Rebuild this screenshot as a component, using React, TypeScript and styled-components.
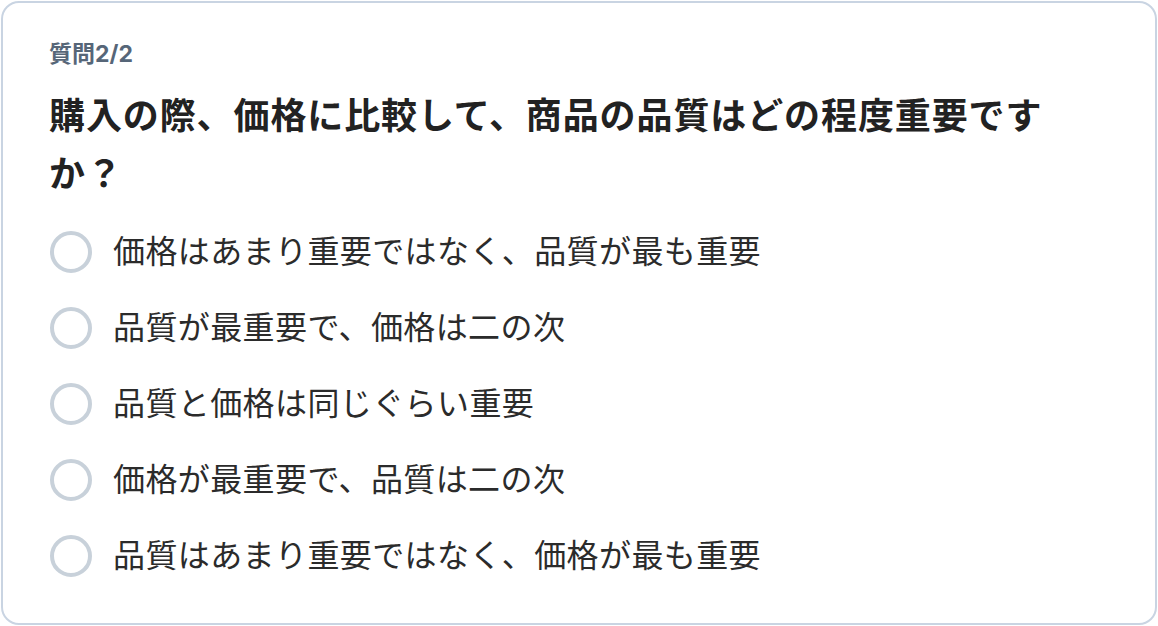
import styled, { createGlobalStyle } from "styled-components";

const GlobalStyle = createGlobalStyle`
  html, body {
    margin: 0;
    padding: 0;
    background: #ffffff;
  }
  body {
    font-family: "Inter", "Noto Sans CJK JP", sans-serif;
  }
`;

const options = [
  "価格はあまり重要ではなく、品質が最も重要",
  "品質が最重要で、価格は二の次",
  "品質と価格は同じぐらい重要",
  "価格が最重要で、品質は二の次",
  "品質はあまり重要ではなく、価格が最も重要",
];

const App = () => {
  return (
    <>
      <GlobalStyle />
      <QuestionCard>
        <Counter>質問2/2</Counter>
        <Question>購入の際、価格に比較して、商品の品質はどの程度重要ですか？</Question>
        <OptionList>
          {options.map((label) => (
            <Option key={label}>
              <RadioInput type="radio" name="quality" value={label} />
              <OptionText>{label}</OptionText>
            </Option>
          ))}
        </OptionList>
      </QuestionCard>
    </>
  );
};

export default App;

const QuestionCard = styled.div`
  box-sizing: border-box;
  margin: 1px;
  width: calc(100vw - 2px);
  height: 624px;
  border: 2px solid #c9d4e2;
  border-radius: 18px;
  background: #fff;
  padding: 36px 46px 40px 46px;
  display: flex;
  flex-direction: column;
`;

const Counter = styled.div`
  font-size: 23px;
  line-height: 30px;
  font-weight: 700;
  color: #566678;
`;

const Question = styled.h1`
  margin: 19px 0 0 0;
  max-width: 1000px;
  font-size: 36px;
  line-height: 57.6px;
  font-weight: 700;
  color: #222222;
  letter-spacing: 0.9px;
`;

const OptionList = styled.div`
  margin-top: 25px;
  display: flex;
  flex-direction: column;
  gap: 28px;
`;

const Option = styled.label`
  display: flex;
  align-items: center;
  gap: 21px;
  height: 48px;
  cursor: pointer;
`;

const RadioInput = styled.input`
  appearance: none;
  box-sizing: border-box;
  margin: 0 0 0 1px;
  width: 42px;
  height: 42px;
  border: 4px solid #c8d1da;
  border-radius: 50%;
  background: #fff;
  flex-shrink: 0;
  cursor: pointer;
`;

const OptionText = styled.span`
  font-size: 32px;
  line-height: 48px;
  color: #2b2b2b;
  letter-spacing: 0.4px;
`;
